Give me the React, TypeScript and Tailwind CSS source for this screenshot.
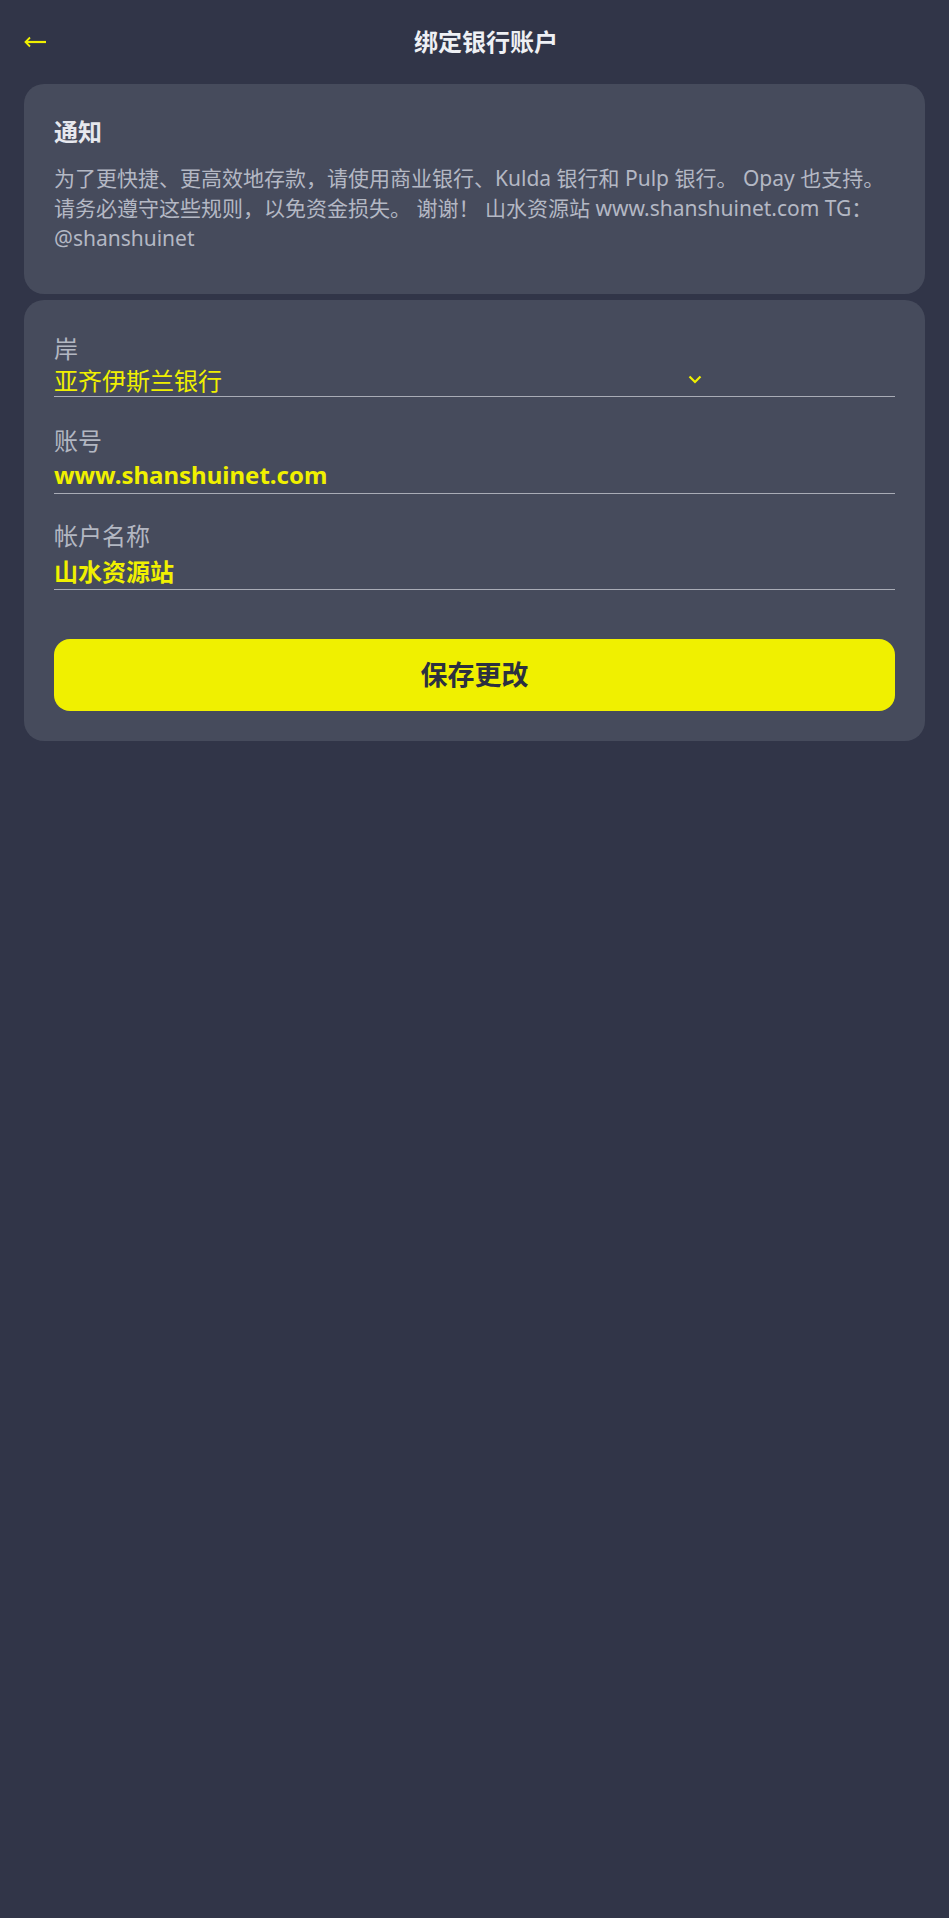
import React from 'react';

const font = { fontFamily: '"Noto Sans", "Noto Sans CJK SC", sans-serif' };

interface FieldProps {
  label: string;
  children: React.ReactNode;
  className?: string;
}

const Field: React.FC<FieldProps> = ({ label, children, className = '' }) => (
  <div className={className}>
    <div className="text-[24px] leading-[30px] text-[#b3b7c2]">{label}</div>
    {children}
  </div>
);

const App: React.FC = () => {
  return (
    <div className="min-h-[1918px] w-full bg-[#313548]" style={font}>
      {/* header */}
      <div className="flex h-[84px] items-center px-[24px]">
        <button className="flex h-[24px] w-[23px] items-center">
          <svg width="23" height="12" viewBox="0 0 23 12" fill="none">
            <path d="M2 6H22" stroke="#f0f000" strokeWidth="2.2" />
            <path d="M6 1.5L1.5 6L6 10.5" stroke="#f0f000" strokeWidth="1.8" />
          </svg>
        </button>
        <h1 className="flex-1 text-center text-[24px] font-bold leading-[32px] text-[#eef0f4]">
          绑定银行账户
        </h1>
      </div>

      <div className="px-[24px]">
        {/* notice */}
        <div className="rounded-[20px] bg-[#464b5c] px-[30px] pb-[41px] pt-[32px]">
          <h2 className="text-[24px] font-bold leading-[32px] text-[#e6e8ee]">通知</h2>
          <p className="mt-[15px] text-[21px] leading-[30px] text-[#b4b8c4]">
            为了更快捷、更高效地存款，请使用商业银行、Kulda 银行和 Pulp 银行。 Opay 也支持。
            请务必遵守这些规则，以免资金损失。 谢谢！ 山水资源站 www.shanshuinet.com TG：
            @shanshuinet
          </p>
        </div>

        {/* form */}
        <div className="mt-[6px] rounded-[20px] bg-[#464b5c] px-[30px] pb-[30px] pt-[34px]">
          <Field label="岸">
            <div className="mt-[2px] border-b border-[#a9acb6]">
              <div className="flex w-[648px] items-center justify-between">
                <span className="text-[24px] leading-[30px] text-[#f0f000]">亚齐伊斯兰银行</span>
                <svg width="14" height="9" viewBox="0 0 14 9" fill="none" className="mb-[4px]">
                  <path d="M1.5 1.5L7 7L12.5 1.5" stroke="#f0f000" strokeWidth="2.2" />
                </svg>
              </div>
            </div>
          </Field>

          <Field label="账号" className="mt-[29px]">
            <div className="mt-[4px] border-b border-[#a9acb6] pb-[3px] text-[24px] font-bold leading-[30px] text-[#f0f000]">
              www.shanshuinet.com
            </div>
          </Field>

          <Field label="帐户名称" className="mt-[27px]">
            <div className="mt-[6px] border-b border-[#a9acb6] pb-[2px] text-[24px] font-bold leading-[30px] text-[#f0f000]">
              山水资源站
            </div>
          </Field>

          <button className="mt-[49px] flex h-[72px] w-full items-center justify-center rounded-[16px] bg-[#f0f000] text-[27px] font-bold text-[#2c3040]">
            保存更改
          </button>
        </div>
      </div>
    </div>
  );
};

export default App;
